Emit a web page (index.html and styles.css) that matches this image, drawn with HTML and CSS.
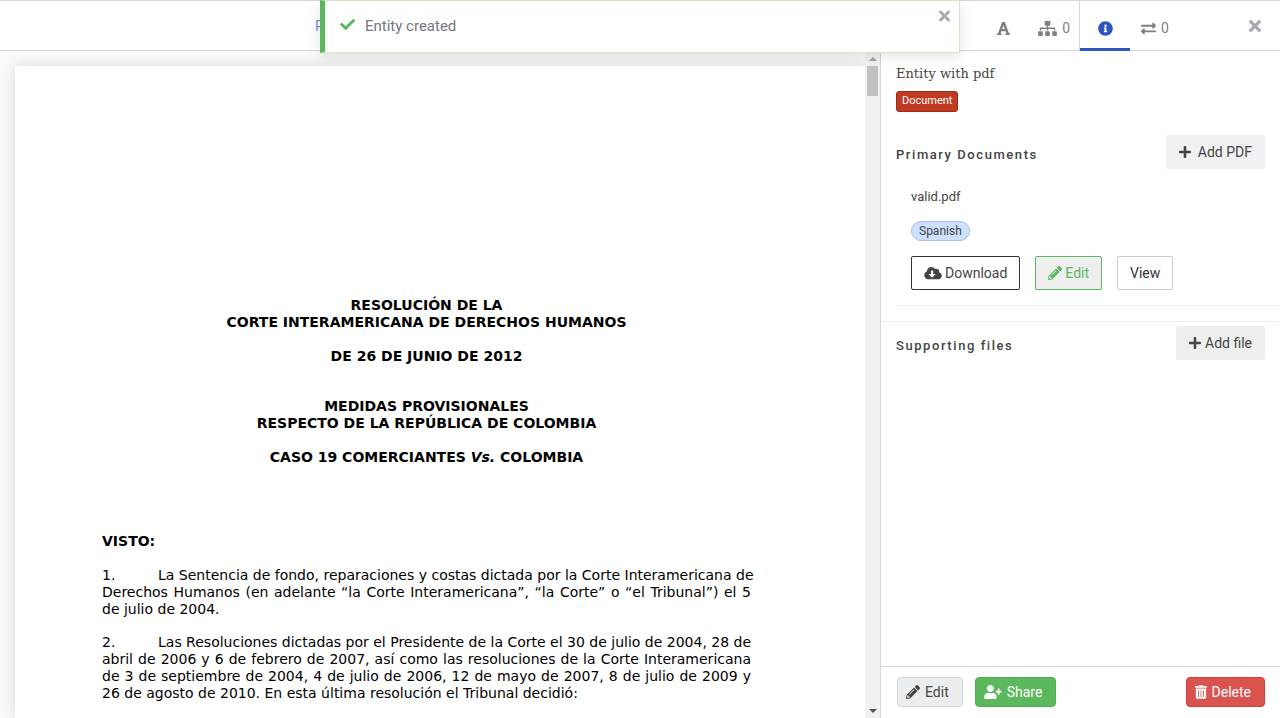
FILE: index.html
```html
<!DOCTYPE html>
<html lang="en">
<head>
<meta charset="utf-8">
<title>Entity with pdf</title>
<link rel="stylesheet" href="styles.css">
</head>
<body>
<svg class="sprite" aria-hidden="true">
  <symbol id="check" viewBox="0 0 512 512"><path d="M173.898 439.404l-166.4-166.4c-9.997-9.997-9.997-26.206 0-36.204l36.203-36.204c9.997-9.998 26.207-9.998 36.204 0L192 312.69 432.095 72.596c9.997-9.997 26.207-9.997 36.204 0l36.203 36.204c9.997 9.997 9.997 26.206 0 36.204l-294.4 294.401c-9.998 9.997-26.207 9.997-36.204-.001z"/></symbol>
  <symbol id="times" viewBox="0 0 352 512"><path d="M242.72 256l100.07-100.07c12.28-12.28 12.28-32.19 0-44.48l-22.24-22.24c-12.28-12.28-32.19-12.28-44.48 0L176 189.28 75.93 89.21c-12.28-12.28-32.19-12.28-44.48 0L9.21 111.45c-12.28 12.28-12.28 32.19 0 44.48L109.28 256 9.21 356.07c-12.28 12.28-12.28 32.19 0 44.48l22.24 22.24c12.28 12.28 32.2 12.28 44.48 0L176 322.72l100.07 100.07c12.28 12.28 32.2 12.28 44.48 0l22.24-22.24c12.28-12.28 12.28-32.19 0-44.48L242.72 256z"/></symbol>
  <symbol id="font" viewBox="0 0 448 512"><path d="M432 416h-23.41L277.88 53.69A32 32 0 0 0 247.58 32h-47.16a32 32 0 0 0-30.3 21.69L39.41 416H16a16 16 0 0 0-16 16v32a16 16 0 0 0 16 16h128a16 16 0 0 0 16-16v-32a16 16 0 0 0-16-16h-19.58l23.3-64h152.56l23.3 64H304a16 16 0 0 0-16 16v32a16 16 0 0 0 16 16h128a16 16 0 0 0 16-16v-32a16 16 0 0 0-16-16zM176.85 272L224 142.51 271.15 272z"/></symbol>
  <symbol id="sitemap" viewBox="0 0 640 512"><path d="M128 352H32c-17.67 0-32 14.33-32 32v96c0 17.67 14.33 32 32 32h96c17.67 0 32-14.33 32-32v-96c0-17.67-14.33-32-32-32zm-24-80h192v48h48v-48h192v48h48v-57.59c0-21.17-17.23-38.41-38.41-38.41H344v-64h40c17.67 0 32-14.33 32-32V32c0-17.67-14.33-32-32-32H256c-17.67 0-32 14.33-32 32v96c0 17.67 14.33 32 32 32h40v64H94.41C73.23 224 56 241.23 56 262.41V320h48v-48zm264 80h-96c-17.67 0-32 14.33-32 32v96c0 17.67 14.33 32 32 32h96c17.67 0 32-14.33 32-32v-96c0-17.67-14.33-32-32-32zm240 0h-96c-17.67 0-32 14.33-32 32v96c0 17.67 14.33 32 32 32h96c17.67 0 32-14.33 32-32v-96c0-17.67-14.33-32-32-32z"/></symbol>
  <symbol id="info" viewBox="0 0 512 512"><path d="M256 8C119.043 8 8 119.083 8 256c0 136.997 111.043 248 248 248s248-111.003 248-248C504 119.083 392.957 8 256 8zm0 110c23.196 0 42 18.804 42 42s-18.804 42-42 42-42-18.804-42-42 18.804-42 42-42zm56 254c0 6.627-5.373 12-12 12h-88c-6.627 0-12-5.373-12-12v-24c0-6.627 5.373-12 12-12h12v-64h-12c-6.627 0-12-5.373-12-12v-24c0-6.627 5.373-12 12-12h64c6.627 0 12 5.373 12 12v100h12c6.627 0 12 5.373 12 12v24z"/></symbol>
  <symbol id="exchange" viewBox="0 0 512 512"><path d="M0 168v-16c0-13.255 10.745-24 24-24h360V80c0-21.367 25.899-32.042 40.971-16.971l80 80c9.372 9.373 9.372 24.569 0 33.941l-80 80C409.956 271.982 384 261.456 384 240v-48H24c-13.255 0-24-10.745-24-24zm488 152H128v-48c0-21.314-25.862-32.08-40.971-16.971l-80 80c-9.372 9.373-9.372 24.569 0 33.941l80 80C102.057 463.997 128 453.437 128 432v-48h360c13.255 0 24-10.745 24-24v-16c0-13.255-10.745-24-24-24z"/></symbol>
  <symbol id="plus" viewBox="0 0 448 512"><path d="M416 208H272V64c0-17.67-14.33-32-32-32h-32c-17.67 0-32 14.33-32 32v144H32c-17.67 0-32 14.33-32 32v32c0 17.67 14.33 32 32 32h144v144c0 17.67 14.33 32 32 32h32c17.67 0 32-14.33 32-32V304h144c17.67 0 32-14.33 32-32v-32c0-17.67-14.33-32-32-32z"/></symbol>
  <symbol id="download" viewBox="0 0 640 512"><path d="M537.6 226.6c4.1-10.7 6.4-22.4 6.4-34.6 0-53-43-96-96-96-19.7 0-38.1 6-53.3 16.2C367 64.2 315.3 32 256 32c-88.4 0-160 71.6-160 160 0 2.7.1 5.4.2 8.1C40.2 219.8 0 273.2 0 336c0 79.5 64.5 144 144 144h368c70.7 0 128-57.3 128-128 0-61.9-44-113.6-102.4-125.4zm-132.9 88.7L299.3 420.7c-6.2 6.2-16.4 6.2-22.6 0L171.3 315.3c-10.1-10.1-2.9-27.3 11.3-27.3H248V176c0-8.8 7.2-16 16-16h48c8.8 0 16 7.2 16 16v112h65.4c14.2 0 21.4 17.2 11.3 27.3z"/></symbol>
  <symbol id="pencil" viewBox="0 0 512 512"><path d="M497.9 142.1l-46.1 46.1c-4.7 4.7-12.3 4.7-17 0l-111-111c-4.7-4.7-4.7-12.3 0-17l46.1-46.1c18.7-18.7 49.1-18.7 67.9 0l60.1 60.1c18.8 18.7 18.8 49.1 0 67.9zM284.2 99.8L21.6 362.4.4 483.9c-2.9 16.4 11.4 30.6 27.8 27.8l121.5-21.3 262.6-262.6c4.7-4.7 4.7-12.3 0-17l-111-111c-4.8-4.7-12.4-4.7-17.1 0zM124.1 339.9c-5.5-5.5-5.5-14.3 0-19.8l154-154c5.5-5.5 14.3-5.5 19.8 0s5.5 14.3 0 19.8l-154 154c-5.5 5.5-14.3 5.5-19.8 0zM88 424h48v36.3l-64.5 11.3-31.1-31.1L51.7 376H88v48z"/></symbol>
  <symbol id="user-plus" viewBox="0 0 640 512"><path d="M624 208h-64v-64c0-8.8-7.2-16-16-16h-32c-8.8 0-16 7.2-16 16v64h-64c-8.8 0-16 7.2-16 16v32c0 8.8 7.2 16 16 16h64v64c0 8.8 7.2 16 16 16h32c8.8 0 16-7.2 16-16v-64h64c8.8 0 16-7.2 16-16v-32c0-8.8-7.2-16-16-16zm-400 48c70.7 0 128-57.3 128-128S294.7 0 224 0 96 57.3 96 128s57.3 128 128 128zm89.6 32h-16.7c-22.2 10.2-46.9 16-72.9 16s-50.6-5.8-72.9-16h-16.7C60.2 288 0 348.2 0 422.4V464c0 26.5 21.5 48 48 48h352c26.5 0 48-21.5 48-48v-41.6c0-74.2-60.2-134.4-134.4-134.4z"/></symbol>
  <symbol id="trash" viewBox="0 0 448 512"><path d="M32 464a48 48 0 0 0 48 48h288a48 48 0 0 0 48-48V128H32zm272-256a16 16 0 0 1 32 0v224a16 16 0 0 1-32 0zm-96 0a16 16 0 0 1 32 0v224a16 16 0 0 1-32 0zm-96 0a16 16 0 0 1 32 0v224a16 16 0 0 1-32 0zM432 32H312l-9.4-18.7A24 24 0 0 0 281.1 0H166.8a23.72 23.72 0 0 0-21.4 13.3L136 32H16A16 16 0 0 0 0 48v32a16 16 0 0 0 16 16h416a16 16 0 0 0 16-16V48a16 16 0 0 0-16-16z"/></symbol>
</svg>

<div class="app">
  <header class="topbar">
    <div class="topbar-main"><a class="view-link" href="#">P</a></div>
    <nav class="tabs">
      <button class="tab" aria-label="Table of contents"><svg class="tab-icon"><use href="#font"/></svg></button>
      <button class="tab" aria-label="References"><svg class="tab-icon tab-icon-wide"><use href="#sitemap"/></svg><span>0</span></button>
      <button class="tab tab-active" aria-label="Info"><svg class="tab-icon"><use href="#info"/></svg></button>
      <button class="tab" aria-label="Connections"><svg class="tab-icon"><use href="#exchange"/></svg><span>0</span></button>
    </nav>
    <button class="close" aria-label="Close panel"><svg class="icon-close-large"><use href="#times"/></svg></button>
  </header>

  <div class="content">
    <main class="viewer">
      <div class="canvas">
        <article class="page">
          <div class="heading">
            <p>RESOLUCIÓN DE LA</p>
            <p>CORTE INTERAMERICANA DE DERECHOS HUMANOS</p>
            <p class="spaced">DE 26 DE JUNIO DE 2012</p>
            <p class="spaced-wide">MEDIDAS PROVISIONALES</p>
            <p>RESPECTO DE LA REPÚBLICA DE COLOMBIA</p>
            <p class="spaced">CASO 19 COMERCIANTES <em>Vs.</em> COLOMBIA</p>
          </div>
          <h2 class="visto">VISTO:</h2>
          <div class="para">
            <div class="first-line"><span class="num">1.</span><span class="line">La Sentencia de fondo, reparaciones y costas dictada por la Corte Interamericana de</span></div>
            <div class="line">Derechos Humanos (en adelante “la Corte Interamericana”, “la Corte” o “el Tribunal”) el 5</div>
            <div>de julio de 2004.</div>
          </div>
          <div class="para">
            <div class="first-line"><span class="num">2.</span><span class="line">Las Resoluciones dictadas por el Presidente de la Corte el 30 de julio de 2004, 28 de</span></div>
            <div class="line">abril de 2006 y 6 de febrero de 2007, así como las resoluciones de la Corte Interamericana</div>
            <div class="line">de 3 de septiembre de 2004, 4 de julio de 2006, 12 de mayo de 2007, 8 de julio de 2009 y</div>
            <div>26 de agosto de 2010. En esta última resolución el Tribunal decidió:</div>
          </div>
        </article>
      </div>
      <div class="scrollbar" aria-hidden="true">
        <svg class="arrow arrow-up" viewBox="0 0 8 4"><path d="M0 4L4 0L8 4z"/></svg>
        <div class="thumb"></div>
        <svg class="arrow arrow-down" viewBox="0 0 8 4"><path d="M0 0L4 4L8 0z"/></svg>
      </div>
    </main>

    <aside class="panel">
      <div class="panel-body">
        <section class="entity">
          <h1 class="entity-title">Entity with pdf</h1>
          <span class="type-label">Document</span>
        </section>
        <section class="documents">
          <div class="section-head">
            <h2 class="section-title">Primary Documents</h2>
            <button class="btn btn-soft"><svg class="icon icon-narrow"><use href="#plus"/></svg><span>Add PDF</span></button>
          </div>
          <div class="file">
            <div class="file-name">valid.pdf</div>
            <span class="language">Spanish</span>
            <div class="file-actions">
              <a class="btn btn-dark" href="#"><svg class="icon icon-wide"><use href="#download"/></svg><span>Download</span></a>
              <button class="btn btn-green"><svg class="icon"><use href="#pencil"/></svg><span>Edit</span></button>
              <a class="btn btn-plain" href="#">View</a>
            </div>
          </div>
        </section>
        <section class="supporting">
          <h2 class="section-title">Supporting files</h2>
          <button class="btn btn-grey"><svg class="icon icon-narrow"><use href="#plus"/></svg><span>Add file</span></button>
        </section>
      </div>
      <footer class="panel-foot">
        <button class="action"><svg class="icon"><use href="#pencil"/></svg><span>Edit</span></button>
        <button class="action action-share"><svg class="icon icon-wide"><use href="#user-plus"/></svg><span>Share</span></button>
        <button class="action action-delete"><svg class="icon icon-narrow"><use href="#trash"/></svg><span>Delete</span></button>
      </footer>
    </aside>
  </div>
</div>

<div class="toast" role="status">
  <svg class="toast-icon"><use href="#check"/></svg>
  <span class="toast-text">Entity created</span>
  <button class="toast-close" aria-label="Dismiss"><svg class="icon-close"><use href="#times"/></svg></button>
</div>
</body>
</html>
```
FILE: styles.css
```css
* { box-sizing: border-box; }
body, h1, h2, p { margin: 0; }
body {
  font-family: Roboto, sans-serif;
  font-size: 14px;
  line-height: 20px;
  color: #444;
  background: #fff;
  overflow: hidden;
}
button { font: inherit; color: inherit; background: none; border: 0; padding: 0; }
a { text-decoration: none; color: inherit; }
svg { display: block; fill: currentColor; flex: none; }
.sprite { position: absolute; width: 0; height: 0; }
.icon { width: 14px; height: 14px; }
.icon-wide { width: 18px; }
.icon-narrow { width: 12px; }
.icon-close { width: 11px; height: 16px; }
.icon-close-large { width: 12px; height: 18px; }

.app { height: 100vh; display: flex; flex-direction: column; }

.topbar {
  display: flex;
  height: 51px;
  border-top: 1px solid #d5d5dc;
  border-bottom: 1px solid #d5d5dc;
}
.topbar-main { flex: 1; display: flex; align-items: center; padding-left: 315px; }
.view-link { color: #6e8bd8; }
.tabs { display: flex; margin-bottom: -1px; color: #7f7f7f; }
.tab {
  min-width: 50px;
  display: flex;
  align-items: center;
  justify-content: center;
  gap: 5px;
  padding: 4px 10px 0;
}
.tab-icon { width: 15px; height: 15px; }
.tab-icon-wide { width: 19px; }
.tab-active {
  color: #2b56c1;
  padding-top: 7px;
  border-bottom: 3px solid #2b56c1;
  box-shadow: -1px 0 0 #d5d5dc;
}
.close { padding: 0 19px 0 69px; color: #a9a9b3; }

.content { flex: 1; min-height: 0; display: flex; }
.viewer { flex: 1; min-width: 0; display: flex; background: #fbfbfb; }
.canvas { flex: 1; padding: 15px 0 0 15px; overflow: hidden; }
.page {
  min-height: 100%;
  padding: 231px 114px 0 87px;
  background: #fff;
  box-shadow: 0 0 15px rgba(0, 0, 0, 0.15);
  color: #000;
  font-family: Verdana, "DejaVu Sans", sans-serif;
  font-size: 14px;
  line-height: 17px;
}
.heading { text-align: center; font-weight: bold; }
.spaced { margin-top: 17px; }
.spaced-wide { margin-top: 33px; }
.visto { margin-top: 67px; font-size: 14px; font-weight: bold; }
.para { margin-top: 17px; white-space: nowrap; }
.para + .para { margin-top: 16px; }
.first-line { display: flex; }
.num { flex: none; width: 56px; }
.line { flex: 1; text-align: justify; text-align-last: justify; }

.scrollbar {
  width: 15px;
  display: flex;
  flex-direction: column;
  align-items: center;
  padding: 6px 0 5px;
  background: #f1f1f1;
}
.arrow { width: 8px; height: 4px; }
.arrow-up { color: #a3a3a3; }
.arrow-down { margin-top: auto; color: #505050; }
.thumb { width: 11px; height: 30px; margin-top: 5px; background: #c1c1c1; }

.panel {
  width: 400px;
  display: flex;
  flex-direction: column;
  border-left: 1px solid #d5d5dc;
}
.panel-body { flex: 1; }
.entity { padding: 13px 15px 0; }
.entity-title {
  font: 13px/20px "Roboto Slab", "DejaVu Serif", serif;
}
.type-label {
  display: block;
  width: fit-content;
  margin-top: 7px;
  padding: 0 5px 2px;
  border: 1px solid #9c2d1b;
  border-radius: 3px;
  background: #c03b22;
  color: #fff;
  font-size: 11px;
  line-height: 17px;
}
.documents { padding: 23px 0 15px 15px; border-bottom: 1px solid #eee; }
.section-head { display: flex; justify-content: space-between; align-items: center; padding-right: 15px; }
.section-title { font-size: 13px; font-weight: 500; line-height: 20px; letter-spacing: 0.12em; padding-top: 6px; }
.btn {
  display: flex;
  align-items: center;
  gap: 3px;
  height: 34px;
  padding: 0 12px;
  border: 1px solid transparent;
  border-radius: 2px;
}
.btn-soft { gap: 7px; background: #f1f1f3; }
.btn-grey { gap: 4px; background: #eee; }
.btn-dark { border-color: #333; }
.btn-green { border-color: #5cb85c; background: #eee; color: #5cb85c; }
.btn-plain { border-color: #ccc; color: #333; }
.file { padding: 18px 0 15px 15px; border-bottom: 1px solid #eee; }
.file-name { font-size: 13px; }
.language {
  display: block;
  width: fit-content;
  margin-top: 14px;
  padding: 0 7px;
  border: 1px solid #a9bedf;
  border-radius: 10px;
  background: #cce0ff;
  font-size: 12px;
  line-height: 18px;
}
.file-actions { display: flex; gap: 15px; margin-top: 15px; }
.supporting { display: flex; justify-content: space-between; align-items: center; padding: 4px 15px; }

.panel-foot { display: flex; gap: 12px; padding: 10px 15px 11px 16px; border-top: 1px solid #d5d5dc; }
.action {
  display: flex;
  align-items: center;
  gap: 5px;
  height: 30px;
  padding: 0 13px 0 8px;
  border: 1px solid #d0d6db;
  border-radius: 4px;
  background: #ebeef1;
}
.action-share { background: #5cb85c; border-color: #4cae4c; color: #fff; }
.action-delete { margin-left: auto; background: #d9534f; border-color: #d43f3a; color: #fff; }

.toast {
  position: absolute;
  top: 0;
  left: 25%;
  width: 50%;
  display: flex;
  align-items: center;
  height: 53px;
  padding: 0 0 2px 15px;
  border: 1px solid #d0e9c0;
  border-left: 5px solid #5cb85c;
  background: #fff;
  box-shadow: 0 4px 12px rgba(0, 0, 0, 0.1);
  color: #777582;
  font-size: 15px;
}
.toast-icon { width: 15px; height: 15px; margin: 0 10px 3px 0; color: #5cb85c; }
.toast-close { margin-left: auto; align-self: flex-start; padding: 7px 9px; color: #a9a9b3; }
```
